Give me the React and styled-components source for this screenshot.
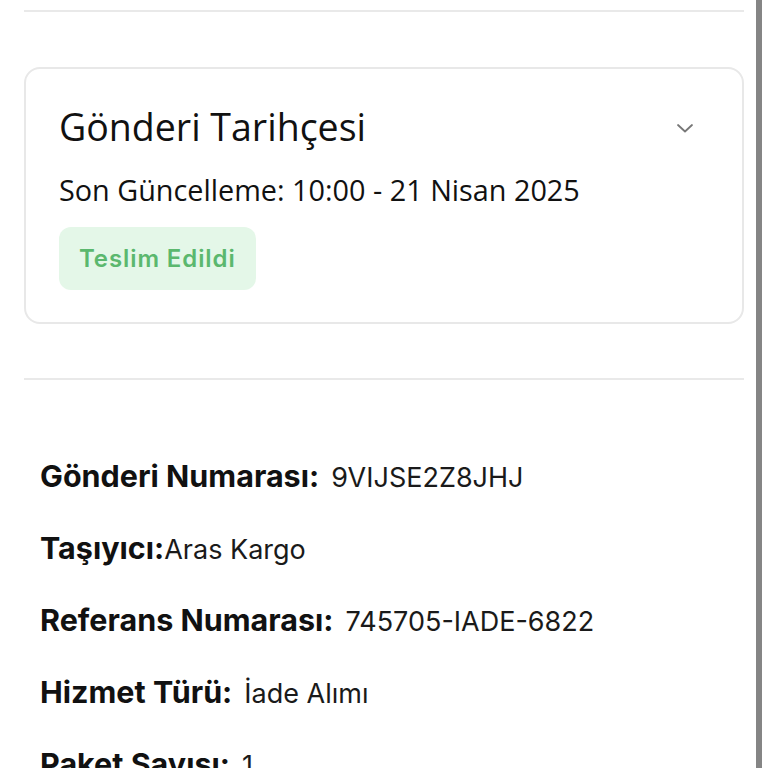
import React from 'react';
import styled, { createGlobalStyle } from 'styled-components';

const Global = createGlobalStyle`
  html, body {
    margin: 0;
    padding: 0;
    background: #fff;
  }
  body {
    font-family: "Inter", "Liberation Sans", sans-serif;
    color: #111;
  }
`;

const Page = styled.div`
  width: 762px;
  height: 768px;
  box-sizing: border-box;
  border-right: 6px solid #858585;
  padding: 10px 12px 0 24px;
  overflow: hidden;
`;

const Divider = styled.div`
  height: 2px;
  background: #e9e9e9;
`;

const Card = styled.section`
  border: 2px solid #e8e8e8;
  border-radius: 16px;
  padding: 36px 12px 32px 33px;
  margin: 55px 0 54px;
  height: 257px;
  box-sizing: border-box;
  font-family: "Open Sans", "Noto Sans", sans-serif;
`;

const CardHead = styled.div`
  display: flex;
  align-items: center;
  justify-content: space-between;
`;

const Title = styled.h2`
  margin: 0;
  font-size: 37.5px;
  line-height: 44px;
  font-weight: 500;
  color: #111;
`;

const Chevron = styled.svg`
  width: 24px;
  height: 24px;
  margin: 2px 33px 0 0;
  color: #777;
`;

const Updated = styled.p`
  margin: 24px 0 0;
  font-size: 28.8px;
  line-height: 34px;
  font-weight: 500;
  color: #111;
`;

const Badge = styled.span`
  display: inline-flex;
  align-items: center;
  margin-top: 20px;
  height: 63px;
  padding: 0 20px 0 20px;
  box-sizing: border-box;
  border-radius: 12px;
  background: #e4f7e8;
  color: #5bb86e;
  font-family: "Inter", sans-serif;
  font-size: 24px;
  letter-spacing: 0.9px;
  font-weight: 600;
`;

const DetailList = styled.dl`
  margin: 0;
  padding: 81px 16px 0;
  display: flex;
  flex-direction: column;
  gap: 40px;
`;

const Row = styled.div`
  display: flex;
  align-items: baseline;
  line-height: 30px;
`;

const Label = styled.dt`
  font-size: 30.5px;
  font-weight: 700;
  color: #111;
  margin-right: ${p => (p.$tight ? '0' : '12px')};
`;

const Value = styled.dd`
  margin: 0;
  font-size: 27px;
  font-weight: 400;
  color: #1a1a1a;
`;

const details = [
  { label: 'Gönderi Numarası:', value: '9VIJSE2Z8JHJ' },
  { label: 'Taşıyıcı:', value: 'Aras Kargo', tight: true },
  { label: 'Referans Numarası:', value: '745705-IADE-6822' },
  { label: 'Hizmet Türü:', value: 'İade Alımı' },
  { label: 'Paket Sayısı:', value: '1' },
];

export default function App() {
  return (
    <>
      <Global />
      <Page>
        <Divider />
        <Card>
          <CardHead>
            <Title>Gönderi Tarihçesi</Title>
            <Chevron viewBox="0 0 24 24" fill="none" stroke="currentColor" strokeWidth="1.8" strokeLinecap="round" strokeLinejoin="round">
              <path d="M5 9l7 6.5L19 9" />
            </Chevron>
          </CardHead>
          <Updated>Son Güncelleme: 10:00 - 21 Nisan 2025</Updated>
          <Badge>Teslim Edildi</Badge>
        </Card>
        <Divider />
        <DetailList>
          {details.map(d => (
            <Row key={d.label}>
              <Label $tight={d.tight}>{d.label}</Label>
              <Value>{d.value}</Value>
            </Row>
          ))}
        </DetailList>
      </Page>
    </>
  );
}
